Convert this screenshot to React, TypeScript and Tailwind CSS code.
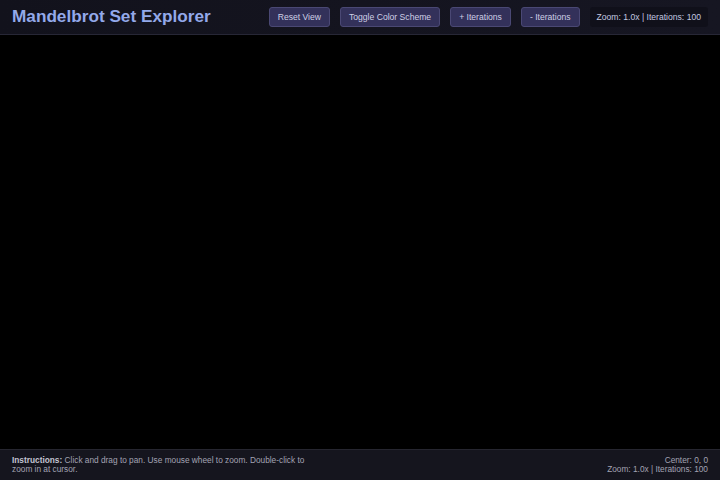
// CORE
import { useState } from 'react';

const BUTTONS = ['Reset View', 'Toggle Color Scheme', '+ Iterations', '- Iterations'];

export default function App() {
  const [zoom] = useState(1);
  const [iterations] = useState(100);

  const status = `Zoom: ${zoom.toFixed(1)}x | Iterations: ${iterations}`;

  return (
    <div className="flex h-[480px] w-[720px] flex-col bg-black font-['Liberation_Sans',Arial,sans-serif]">
      {/* HEADER */}
      <header className="flex h-[35px] items-center justify-between border-b border-[#272736] bg-gradient-to-r from-[#12121c] to-[#161622] px-3">
        <h1 className="text-[17.2px] font-bold text-[#93a9ea]">Mandelbrot Set Explorer</h1>

        <div className="flex items-center gap-[10px]">
          {BUTTONS.map((label) => (
            <button
              key={label}
              className="h-[20px] rounded-[3px] border border-[#4a4874] bg-[#33315a] px-[8px] text-[8.6px] text-[#cfd0e6]"
            >
              {label}
            </button>
          ))}
          <div className="flex h-[20px] items-center rounded-[3px] bg-[#10101a] px-[7px] text-[8.6px] text-[#c3c9e0]">
            {status}
          </div>
        </div>
      </header>

      {/* CANVAS */}
      <main className="flex-1 bg-black" />

      {/* FOOTER */}
      <footer className="flex h-[31px] items-center justify-between border-t border-[#262630] bg-[#15151e] px-3 text-[8.3px] leading-[9.5px] text-[#a3a3b3]">
        <p className="w-[302px]">
          <span className="font-bold text-[#c4c4d2]">Instructions:</span> Click and drag to pan. Use mouse wheel
          to zoom. Double-click to zoom in at cursor.
        </p>
        <div className="text-right">
          <p>Center: 0, 0</p>
          <p>{status}</p>
        </div>
      </footer>
    </div>
  );
}
